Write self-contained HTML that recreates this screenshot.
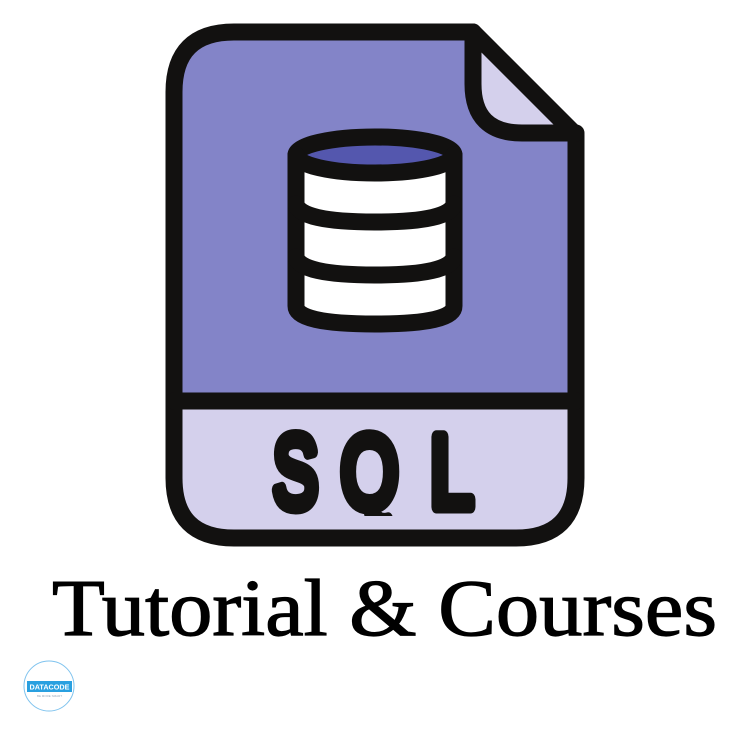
<!DOCTYPE html>
<html><head><meta charset="utf-8"><style>
html,body{margin:0;padding:0;background:#fff;width:750px;height:750px;overflow:hidden}
</style></head><body>
<svg width="750" height="750" viewBox="0 0 750 750" xmlns="http://www.w3.org/2000/svg">
  <defs><clipPath id="c"><rect x="0" y="0" width="750" height="516"/></clipPath></defs>
  <path d="M174 401 V92 Q174 32 234 32 H473 L576 135 V401 Z" fill="#8384c8"/>
  <path d="M174 401 H576 V478 Q576 538 516 538 H234 Q174 538 174 478 Z" fill="#d4d0ec"/>
  <path d="M473 32 V88 Q473 133 520 133 H576 Z" fill="#d4d0ec"/>
  <g fill="none" stroke="#121110" stroke-width="17" stroke-linejoin="round" stroke-linecap="round">
    <path d="M234 32 H473 L576 135 V478 Q576 538 516 538 H234 Q174 538 174 478 V92 Q174 32 234 32 Z"/>
    <path d="M473 32 V84 Q473 133 522 133 H576"/>
    <path d="M174 401 H576"/>
  </g>
  <path d="M296 155 V306 Q296 323 375 323 Q454 323 454 306 V155 Z" fill="#fff"/>
  <ellipse cx="375" cy="155" rx="79" ry="18" fill="#5457ae"/>
  <g fill="none" stroke="#121110" stroke-width="17" stroke-linejoin="round" stroke-linecap="round">
    <ellipse cx="375" cy="155" rx="79" ry="18"/>
    <path d="M296 155 V306 Q296 324 375 324 Q454 324 454 306 V155"/>
    <path d="M296 204 Q300 222 375 222 Q450 222 454 204"/>
    <path d="M296 257 Q300 275 375 275 Q450 275 454 257"/>
  </g>
  <g clip-path="url(#c)" font-family="Liberation Sans, sans-serif" font-size="102" fill="#121110" stroke="#121110" stroke-width="13" stroke-linejoin="round">
    <text transform="translate(273,507) scale(0.66,1)">S</text>
    <text transform="translate(341,507) scale(0.72,1)">Q</text>
    <text transform="translate(430,507) scale(0.76,1)">L</text>
  </g>
  <text x="52" y="635" font-family="Liberation Serif, serif" font-size="80" fill="#000" stroke="#000" stroke-width="1.2" textLength="665" lengthAdjust="spacingAndGlyphs">Tutorial &amp; Courses</text>
  <circle cx="49" cy="686" r="25" fill="none" stroke="#7fc3ee" stroke-width="1"/>
  <rect x="27" y="681" width="45" height="11" fill="#29a0e0"/>
  <text x="49.5" y="689.5" text-anchor="middle" font-family="Liberation Sans, sans-serif" font-weight="bold" font-size="7" fill="#fff" textLength="40" lengthAdjust="spacingAndGlyphs">DATACODE</text>
  <text x="49.5" y="697" text-anchor="middle" font-family="Liberation Sans, sans-serif" font-size="3" fill="#9ab">BE MORE SMART</text>
</svg>
</body></html>
